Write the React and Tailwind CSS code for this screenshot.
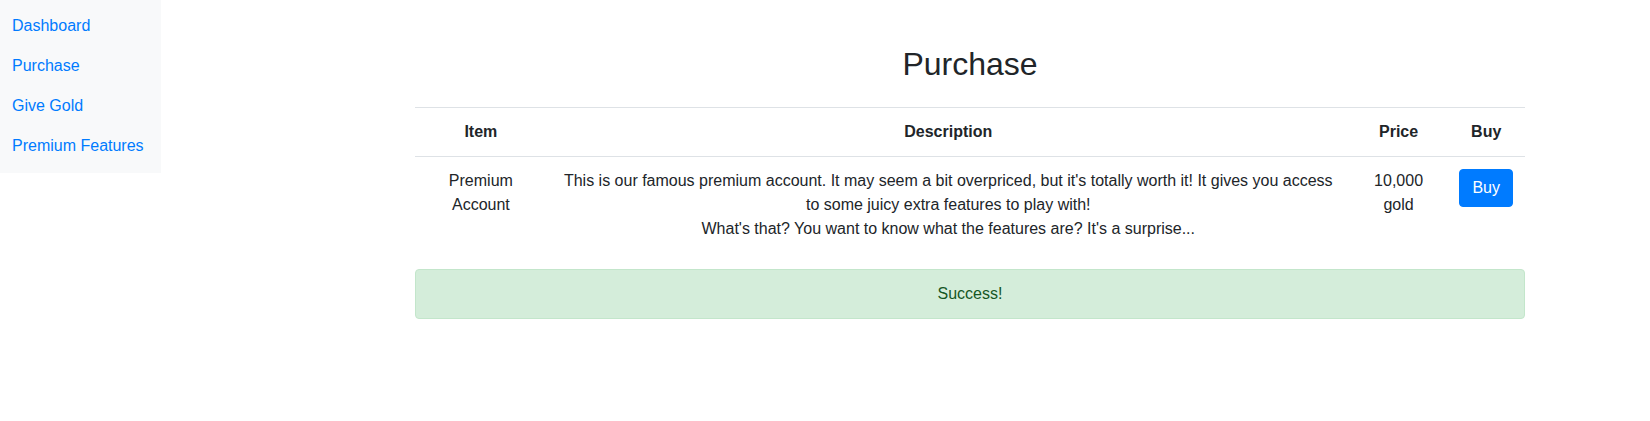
import React from "react";

const links = ["Dashboard", "Purchase", "Give Gold", "Premium Features"];

export default function App() {
  return (
    <div className="flex items-start min-h-screen bg-white text-[#212529] text-base leading-6 font-['Liberation_Sans',Arial,sans-serif]">
      {/* Sidebar */}
      <nav className="w-[161px] shrink-0 bg-[#f8f9fa] pt-[6px] pb-[7px]">
        {links.map((l) => (
          <a key={l} href="#" className="block px-3 py-2 text-[#007bff] whitespace-nowrap">
            {l}
          </a>
        ))}
      </nav>

      {/* Main */}
      <main className="ml-[254px] w-[1110px]">
        <h2 className="mt-[45px] mb-6 text-center text-[32px] leading-[38px] font-normal">Purchase</h2>

        <table className="w-full border-collapse text-center mb-4">
          <thead>
            <tr>
              <th className="p-3 font-bold border-t border-b border-[#dee2e6]">Item</th>
              <th className="p-3 font-bold border-t border-b border-[#dee2e6]">Description</th>
              <th className="p-3 font-bold border-t border-b border-[#dee2e6]">Price</th>
              <th className="p-3 font-bold border-t border-b border-[#dee2e6]">Buy</th>
            </tr>
          </thead>
          <tbody>
            <tr>
              <td className="p-3 align-top">Premium Account</td>
              <td className="p-3 align-top">
                This is our famous premium account. It may seem a bit overpriced, but it's totally worth it! It gives you access to some juicy extra features to play with!
                <br />
                What's that? You want to know what the features are? It's a surprise...
              </td>
              <td className="p-3 align-top">10,000 gold</td>
              <td className="p-3 align-top">
                <button className="px-3 py-1.5 leading-6 text-white bg-[#007bff] border border-[#007bff] rounded">
                  Buy
                </button>
              </td>
            </tr>
          </tbody>
        </table>

        <div className="border border-[#c3e6cb] bg-[#d4edda] text-[#155724] rounded px-5 py-3 text-center">
          Success!
        </div>
      </main>
    </div>
  );
}
